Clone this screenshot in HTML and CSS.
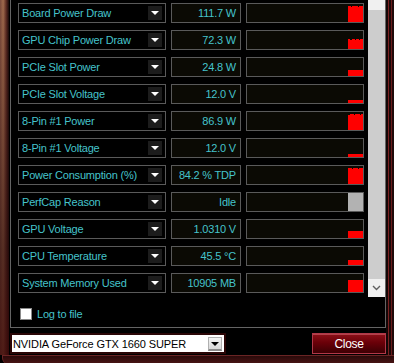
FILE: index.html
```html
<!DOCTYPE html>
<html lang="en">
<head>
  <meta charset="UTF-8" />
  <title>GPU-Z Sensors</title>
  <link rel="stylesheet" href="styles.css">
</head>
<body>
  <div class="window">
    <div class="frame-left"></div>
    <div class="client">
      <div class="panel">
        <div class="sensor-list">
          <div class="row">
            <div class="label">Board Power Draw<span class="drop"></span></div>
            <div class="value">111.7 W</div>
            <div class="graph"><svg viewBox="0 0 116 18"><path d="M101 18V2h3v1h1V2h6v1h1V2h4v16z" fill="#f00"/></svg></div>
          </div>
          <div class="row">
            <div class="label">GPU Chip Power Draw<span class="drop"></span></div>
            <div class="value">72.3 W</div>
            <div class="graph"><svg viewBox="0 0 116 18"><path d="M101 18V8h2v1h2V8h3v1h1V8h3v1h1V8h3v10z" fill="#f00"/></svg></div>
          </div>
          <div class="row">
            <div class="label">PCIe Slot Power<span class="drop"></span></div>
            <div class="value">24.8 W</div>
            <div class="graph"><svg viewBox="0 0 116 18"><rect x="101" y="12" width="15" height="6" fill="#f00"/></svg></div>
          </div>
          <div class="row">
            <div class="label">PCIe Slot Voltage<span class="drop"></span></div>
            <div class="value">12.0 V</div>
            <div class="graph"><svg viewBox="0 0 116 18"><rect x="101" y="15" width="15" height="3" fill="#f00"/></svg></div>
          </div>
          <div class="row">
            <div class="label">8-Pin #1 Power<span class="drop"></span></div>
            <div class="value">86.9 W</div>
            <div class="graph"><svg viewBox="0 0 116 18"><path d="M101 18V3h2V2h4v1h1V2h5v1h1V2h2v16z" fill="#f00"/></svg></div>
          </div>
          <div class="row">
            <div class="label">8-Pin #1 Voltage<span class="drop"></span></div>
            <div class="value">12.0 V</div>
            <div class="graph"><svg viewBox="0 0 116 18"><rect x="101" y="15" width="15" height="3" fill="#f00"/></svg></div>
          </div>
          <div class="row">
            <div class="label">Power Consumption (%)<span class="drop"></span></div>
            <div class="value">84.2 % TDP</div>
            <div class="graph"><svg viewBox="0 0 116 18"><path d="M101 18V2h4v1h1V2h5v1h1V2h4v16z" fill="#f00"/></svg></div>
          </div>
          <div class="row">
            <div class="label">PerfCap Reason<span class="drop"></span></div>
            <div class="value">Idle</div>
            <div class="graph"><svg viewBox="0 0 116 18"><rect x="101" y="0" width="15" height="18" fill="#b2b2b2"/></svg></div>
          </div>
          <div class="row">
            <div class="label">GPU Voltage<span class="drop"></span></div>
            <div class="value">1.0310 V</div>
            <div class="graph"><svg viewBox="0 0 116 18"><rect x="101" y="11" width="15" height="7" fill="#f00"/></svg></div>
          </div>
          <div class="row">
            <div class="label">CPU Temperature<span class="drop"></span></div>
            <div class="value">45.5 °C</div>
            <div class="graph"><svg viewBox="0 0 116 18"><rect x="101" y="13" width="15" height="5" fill="#f00"/></svg></div>
          </div>
          <div class="row">
            <div class="label">System Memory Used<span class="drop"></span></div>
            <div class="value">10905 MB</div>
            <div class="graph"><svg viewBox="0 0 116 18"><rect x="101" y="6" width="15" height="12" fill="#f00"/></svg></div>
          </div>
          <label class="log"><span class="check"></span>Log to file</label>
        </div>
        <div class="scrollbar">
          <div class="track-top"></div>
          <div class="thumb"></div>
          <div class="arrow-down">
            <svg width="9" height="6" viewBox="0 0 9 6"><path d="M1 1l3.5 3.5L8 1" fill="none" stroke="#606060" stroke-width="1.4"/></svg>
          </div>
        </div>
      </div>
      <div class="footer">
        <div class="gpu-select">
          <span class="gpu-name">NVIDIA GeForce GTX 1660 SUPER</span>
          <span class="select-btn"></span>
        </div>
        <button class="btn-close">Close</button>
      </div>
    </div>
    <div class="frame-right"></div>
  </div>
  <div class="frame-bottom"></div>
</body>
</html>
```

FILE: styles.css
```css
body {
  margin: 0;
  width: 394px;
  height: 363px;
  overflow: hidden;
  background: #000;
  font-family: 'Liberation Sans', Arial, sans-serif;
  font-size: 11px;
}
.window {
  display: flex;
  height: 355px;
}
.frame-left {
  width: 9px;
  background:
    linear-gradient(to bottom, rgba(0,0,0,0) 0%, rgba(40,10,10,0.6) 70%, rgba(60,10,10,0.8) 100%),
    linear-gradient(to right, #7a4a3c 0%, #a06a4c 35%, #5a2a22 70%, #140808 100%);
}
.frame-right {
  width: 8px;
  background: linear-gradient(to right, #120606 0, #120606 2px, #7a2020 2px, #7a2020 3px, #1a0808 3px, #1a0808 5px, #6a1c1c 5px, #6a1c1c 6px, #200a0a 6px);
}
.client {
  flex: 1;
  display: flex;
  flex-direction: column;
}
.panel {
  height: 327px;
  margin-left: 1px;
  border: 1px solid #646464;
  border-top: none;
  display: flex;
  padding-left: 7px;
}
.sensor-list {
  display: flex;
  flex-direction: column;
  padding-top: 3px;
  width: 346px;
}
.row {
  display: flex;
  gap: 5px;
  height: 20px;
  margin-bottom: 7px;
}
.label {
  width: 148px;
  box-sizing: border-box;
  border: 1px solid #5a5a5a;
  background: #000;
  color: #45c3cb;
  display: flex;
  align-items: center;
  justify-content: space-between;
  padding: 0 3px 0 3px;
  letter-spacing: -0.2px;
}
.drop {
  width: 14px;
  height: 14px;
  background: #1c1c1c;
  position: relative;
}
.drop::after {
  content: "";
  position: absolute;
  left: 3px;
  top: 5px;
  border-left: 4px solid transparent;
  border-right: 4px solid transparent;
  border-top: 4px solid #fff;
}
.value {
  width: 70px;
  box-sizing: border-box;
  border: 1px solid #5a5a5a;
  background: #0b0a04;
  color: #45c3cb;
  display: flex;
  align-items: center;
  justify-content: flex-end;
  padding-right: 4px;
  letter-spacing: -0.2px;
}
.graph {
  width: 118px;
  box-sizing: border-box;
  border: 1px solid #5a5a5a;
  background: #0b0a04;
}
.graph svg {
  display: block;
  width: 116px;
  height: 18px;
}
.log {
  display: flex;
  align-items: center;
  gap: 5px;
  margin-top: 8px;
  margin-left: 2px;
  color: #45c3cb;
  letter-spacing: -0.2px;
}
.check {
  width: 10px;
  height: 10px;
  border: 1px solid #8a8a8a;
  background: #fff;
}
.scrollbar {
  width: 17px;
  height: 297px;
  margin-left: 4px;
  display: flex;
  flex-direction: column;
  background: #f0f0f0;
}
.track-top {
  height: 10px;
}
.thumb {
  height: 269px;
  background: #cdcdcd;
}
.arrow-down {
  flex: 1;
  display: flex;
  align-items: center;
  justify-content: center;
}
.footer {
  flex: 1;
  display: flex;
  justify-content: space-between;
  align-items: flex-start;
  padding-top: 5px;
  padding-left: 1px;
}
.gpu-select {
  width: 216px;
  height: 21px;
  box-sizing: border-box;
  border: 2px solid #2a0606;
  background: #fff;
  display: flex;
  align-items: center;
  justify-content: space-between;
  padding-left: 1px;
  padding-right: 2px;
}
.gpu-name {
  color: #000;
  font-size: 11px;
  letter-spacing: -0.1px;
}
.select-btn {
  width: 14px;
  height: 14px;
  box-sizing: border-box;
  background: linear-gradient(#f4f4f4, #d8d8d8);
  border: 1px solid #b0b0b0;
  border-bottom: 2px solid #8a8a8a;
  position: relative;
}
.select-btn::after {
  content: "";
  position: absolute;
  left: 2px;
  top: 4px;
  border-left: 4px solid transparent;
  border-right: 4px solid transparent;
  border-top: 4px solid #000;
}
.btn-close {
  width: 74px;
  height: 21px;
  border: 1px solid #b03848;
  background: linear-gradient(#8c1018 0%, #6a0008 45%, #3c0004 100%);
  color: #fff;
  font-family: 'Liberation Sans', Arial, sans-serif;
  font-size: 12px;
  letter-spacing: -0.3px;
  padding: 0;
  box-shadow: inset 0 1px 0 rgba(255,160,170,0.35);
}
.frame-bottom {
  height: 8px;
  margin-left: 2px;
  border-top: 1px solid #6a2424;
  border-left: 1px solid #6a2424;
  border-bottom-left-radius: 6px;
  background: linear-gradient(#2a0a0a, #4a1414);
}
```
